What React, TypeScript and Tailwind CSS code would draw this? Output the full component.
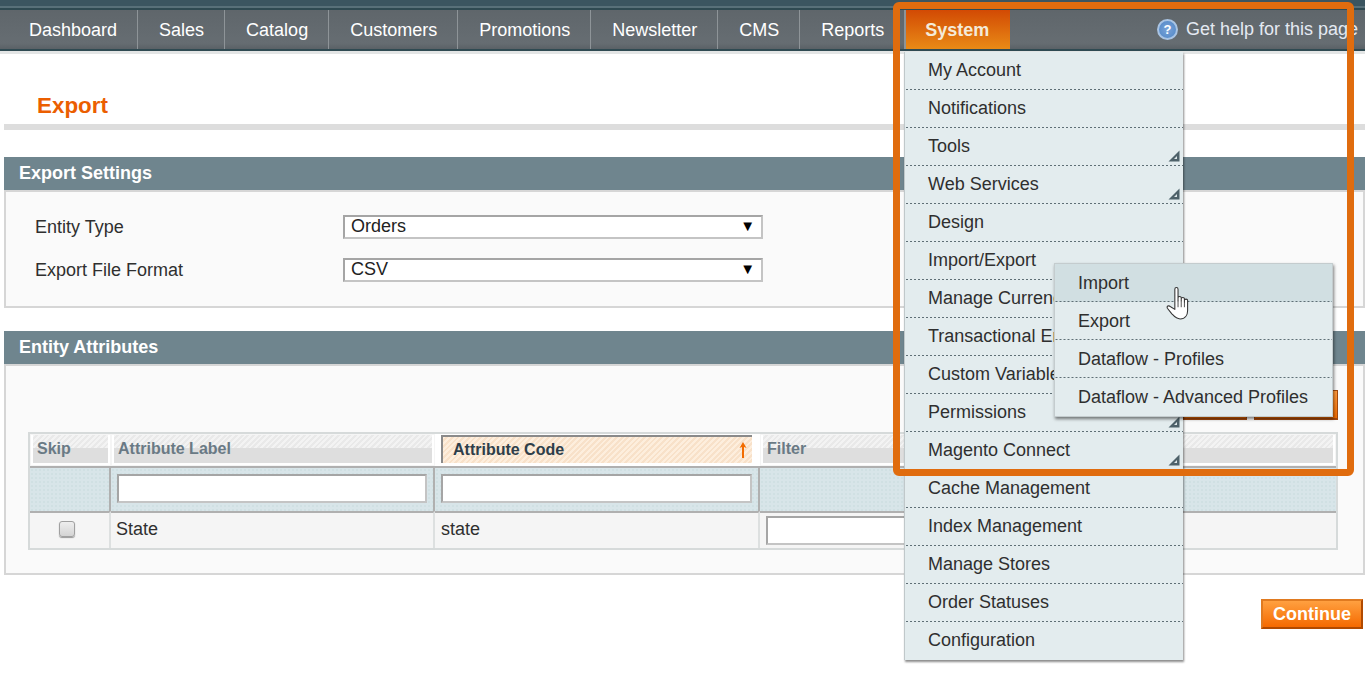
const navItems = ['Dashboard', 'Sales', 'Catalog', 'Customers', 'Promotions', 'Newsletter', 'CMS', 'Reports'];

const systemMenu = [
  { label: 'My Account' },
  { label: 'Notifications' },
  { label: 'Tools', sub: true },
  { label: 'Web Services', sub: true },
  { label: 'Design' },
  { label: 'Import/Export' },
  { label: 'Manage Currency Rates' },
  { label: 'Transactional Emails' },
  { label: 'Custom Variables' },
  { label: 'Permissions', sub: true },
  { label: 'Magento Connect', sub: true },
  { label: 'Cache Management' },
  { label: 'Index Management' },
  { label: 'Manage Stores' },
  { label: 'Order Statuses' },
  { label: 'Configuration' },
];

const subMenu = ['Import', 'Export', 'Dataflow - Profiles', 'Dataflow - Advanced Profiles'];

const hatch =
  'bg-[repeating-linear-gradient(135deg,#f3f3f3_0px,#f3f3f3_2px,#e9e9e9_2px,#e9e9e9_4px)]';

// 1px dotted rule along the bottom of a menu row
const dots = 'bg-[linear-gradient(90deg,#5f6f76_50%,transparent_50%)] bg-[length:4px_1px] bg-bottom bg-repeat-x';

const filterCell = 'border-[#b0b0b0] bg-[#d8e5e9] bg-[radial-gradient(#d0e0e3_1px,transparent_1px)] bg-[length:4px_4px]';

function SubArrow() {
  return (
    <svg className="absolute right-[3px] bottom-[4px]" width="12" height="12" viewBox="0 0 12 12">
      <path d="M11.5 0.5 L11.5 11.5 L0.5 11.5 Z" fill="#4f626a" />
      <path d="M9 6 L9 9 L6 9 Z" fill="#dfe8ea" />
    </svg>
  );
}

function HelpIcon() {
  return (
    <span className="flex h-[21px] w-[21px] items-center justify-center rounded-full border-2 border-[#a9c4e4] bg-[radial-gradient(#7aa3d8,#4f86c6)] text-[13px] leading-none font-bold text-white">
      ?
    </span>
  );
}

function HandCursor() {
  return (
    <svg className="absolute top-[23px] left-[110px]" width="25" height="33" viewBox="1 1 21 31">
      <path
        d="M9 3 C9 1 12 1 12 3 L12 14 L12 11 C12 9.5 15 9.5 15 11 L15 14 L15 12 C15 10.5 18 10.5 18 12 L18 15 L18 13.5 C18 12 21 12 21 13.5 L21 23 C21 27 19 31 14 31 C10 31 8 28 6 26 L2 21 C1 19 3 18 5 19.5 L9 22 Z"
        fill="#fff"
        stroke="#333"
        strokeWidth="1"
        strokeLinejoin="round"
      />
      <path d="M12 14 V20 M15 14 V20 M18 15 V20" stroke="#333" strokeWidth="0.8" fill="none" />
    </svg>
  );
}

function SortArrow() {
  return (
    <svg width="8" height="16" viewBox="0 0 8 16">
      <path d="M4 0 L7.5 6 L5 5 L5 16 L3 16 L3 5 L0.5 6 Z" fill="#f26c00" />
    </svg>
  );
}

function Section({ title, children, className }: { title: string; children: React.ReactNode; className: string }) {
  return (
    <section>
      <h3 className="flex h-[33px] items-center bg-[#6f858e] pl-[15px] text-[18px] font-bold text-white">{title}</h3>
      <div className={`border-2 border-[#d6d6d6] bg-[#fafafa] ${className}`}>{children}</div>
    </section>
  );
}

function SelectBox({ value }: { value: string }) {
  return (
    <div className="flex h-[24px] w-[420px] items-center justify-between border-2 border-t-[#a5a5a5] border-r-[#c4c4c4] border-b-[#c4c4c4] border-l-[#a5a5a5] bg-white pr-[6px] pl-[6px] text-[18px] text-[#222]">
      <span>{value}</span>
      <span className="text-[15px] text-black">▼</span>
    </div>
  );
}

function TextInput({ className }: { className: string }) {
  return (
    <div className={`border-2 border-t-[#a5a5a5] border-r-[#c4c4c4] border-b-[#c4c4c4] border-l-[#a5a5a5] bg-white ${className}`} />
  );
}

function HeadCell({ label }: { label: string }) {
  return (
    <div className={`relative m-[1px] flex items-center border-2 border-t-0 border-white pl-[4px] text-[16px] font-bold text-[#6a7a85] ${hatch}`}>
      <span className="absolute inset-x-0 bottom-0 h-[15px] bg-[#dedede]" />
      <span className="relative">{label}</span>
    </div>
  );
}

export default function App() {
  return (
    <div className="relative h-[673px] w-[1365px] overflow-hidden bg-white font-['Liberation_Sans',Arial,sans-serif] text-[18px] text-[#2f2f2f]">
      {/* top bar */}
      <div className="h-[10px] border-b-[2px] border-[#2f4a52] bg-[#3b5560]">
        <div className="h-[8px] border-b-2 border-[#587079]" />
      </div>
      <nav className="flex h-[39px] items-stretch justify-between bg-[linear-gradient(#5f666b,#666d72_85%,#5a6166)] text-white">
        <ul className="flex items-stretch">
          {navItems.map((item, i) => (
            <li
              key={item}
              className={`flex items-center border-r border-[#8e9498] pt-[1px] pr-[20px] ${i === 0 ? 'pl-[29px]' : 'pl-[21px]'} ${i === navItems.length - 1 ? 'border-r-0' : ''}`}
            >
              {item}
            </li>
          ))}
          <li className="flex w-[106px] items-center justify-center border-l-2 border-[#8e9498] bg-[linear-gradient(#d24a04,#e98a16)] pt-[1px] pr-[2px] font-bold text-[#f4ead8]">
            System
          </li>
        </ul>
        <div className="flex items-center gap-[8px] pr-[7px] text-[#e4e9f2]">
          <HelpIcon />
          <span>Get help for this page</span>
        </div>
      </nav>
      <div className="h-[2px] bg-[#2f4a52]" />
      <div className="h-[3px] bg-[#e3e5e5]" />

      {/* page */}
      <main className="pl-[4px]">
        <div className="flex h-[76px] items-end border-b-[6px] border-[#dddddd] pb-[3px] pl-[33px]">
          <h1 className="text-[22.4px] leading-[30px] font-bold text-[#eb5e00]">Export</h1>
        </div>

        <div className="mt-[27px] flex flex-col gap-[23px]">
          <Section title="Export Settings" className="h-[118px] pt-[20px] pl-[29px]">
            <div className="flex flex-col gap-[14px]">
              <div className="flex items-center">
                <label className="w-[308px] pt-[2px]">Entity Type</label>
                <SelectBox value="Orders" />
              </div>
              <div className="flex items-center">
                <label className="w-[308px] pt-[2px]">Export File Format</label>
                <SelectBox value="CSV" />
              </div>
            </div>
          </Section>

          <Section title="Entity Attributes" className="h-[211px] pt-[24px] pr-[25px] pl-[22px]">
            <div className="flex h-[30px] justify-end gap-[7px]">
              <div className="w-[64px] border border-b-2 border-[#a3480c] bg-[linear-gradient(#ff9a3c,#f26c00)]" />
              <div className="w-[84px] border border-b-2 border-[#a3480c] bg-[linear-gradient(#ff9a3c,#f26c00)]" />
            </div>
            <div className="mt-[12px] grid grid-cols-[81px_324px_325px_1fr] grid-rows-[32px_45px_37px] border-2 border-[#d6dada] bg-[#f5f5f5]">
              <HeadCell label="Skip" />
              <HeadCell label="Attribute Label" />
              <div className="bg-white pt-[1px] pr-[8px] pb-[3px] pl-[6px]">
                <div className="flex h-full items-center justify-between border-t-2 border-l-2 border-[#8a8a8a] bg-[repeating-linear-gradient(135deg,#fdeedd_0px,#fdeedd_2px,#f8e1c9_2px,#f8e1c9_4px)] pr-[5px] pl-[10px] text-[16px] font-bold text-[#2e3e4a]">
                  <span>Attribute Code</span>
                  <SortArrow />
                </div>
              </div>
              <HeadCell label="Filter" />

              <div className={`border-t-2 border-r-2 ${filterCell}`} />
              <div className={`flex items-center justify-center border-t-2 border-r-2 pb-[2px] ${filterCell}`}>
                <TextInput className="h-[29px] w-[310px]" />
              </div>
              <div className={`flex items-center justify-center border-t-2 border-r-2 pb-[2px] ${filterCell}`}>
                <TextInput className="h-[29px] w-[311px]" />
              </div>
              <div className={`border-t-2 ${filterCell}`} />

              <div className="flex items-center justify-center border-t-2 border-r-2 border-t-[#b0b0b0] border-r-[#dde0e0] pr-[6px] pb-[3px]">
                <span className="h-[16px] w-[16px] rounded-[3px] border border-[#a0a0a0] bg-[linear-gradient(#eeeeee,#d4d4d4)] shadow-[0_1px_1px_#999]" />
              </div>
              <div className="flex items-center border-t-2 border-r-2 border-t-[#b0b0b0] border-r-[#dde0e0] pb-[3px] pl-[5px]">State</div>
              <div className="flex items-center border-t-2 border-r-2 border-t-[#b0b0b0] border-r-[#dde0e0] pb-[3px] pl-[6px]">state</div>
              <div className="flex items-center border-t-2 border-t-[#b0b0b0] pl-[6px]">
                <TextInput className="h-[29px] w-[200px]" />
              </div>
            </div>
          </Section>
        </div>

        <div className="mt-[24px] flex justify-end pr-[2px]">
          <button className="flex h-[30px] w-[102px] items-center justify-center border-2 border-t-[#e07a20] border-r-[#b14a00] border-b-[#b14a00] border-l-[#e07a20] bg-[linear-gradient(#ffa040,#f56a00)] font-bold text-white">
            Continue
          </button>
        </div>
      </main>

      {/* System dropdown */}
      <ul className="absolute top-[52px] left-[904px] w-[279px] border-l border-[#c0c8ca] bg-[#e3ecee] shadow-[1px_2px_2px_rgba(0,0,0,0.45)]">
        {systemMenu.map((item, i) => (
          <li
            key={item.label}
            className={`relative flex h-[38px] items-center pb-[2px] pl-[23px] ${i === systemMenu.length - 1 ? '' : dots}`}
          >
            {item.label}
            {item.sub && <SubArrow />}
          </li>
        ))}
      </ul>

      {/* Import/Export flyout */}
      <ul className="absolute top-[263px] left-[1054px] w-[279px] border border-[#c4ccce] bg-[#e3ecee] shadow-[1px_2px_3px_rgba(0,0,0,0.5)]">
        {subMenu.map((item, i) => (
          <li
            key={item}
            className={`relative flex h-[38px] items-center pl-[23px] ${i === 0 ? 'bg-[#d1dfe2]' : ''} ${i === subMenu.length - 1 ? '' : dots}`}
          >
            {item}
          </li>
        ))}
        <HandCursor />
      </ul>

      {/* highlight frame */}
      <div className="pointer-events-none absolute top-[2px] left-[893px] h-[474px] w-[461px] rounded-[6px] border-[7px] border-[#e06c0e]" />
    </div>
  );
}
